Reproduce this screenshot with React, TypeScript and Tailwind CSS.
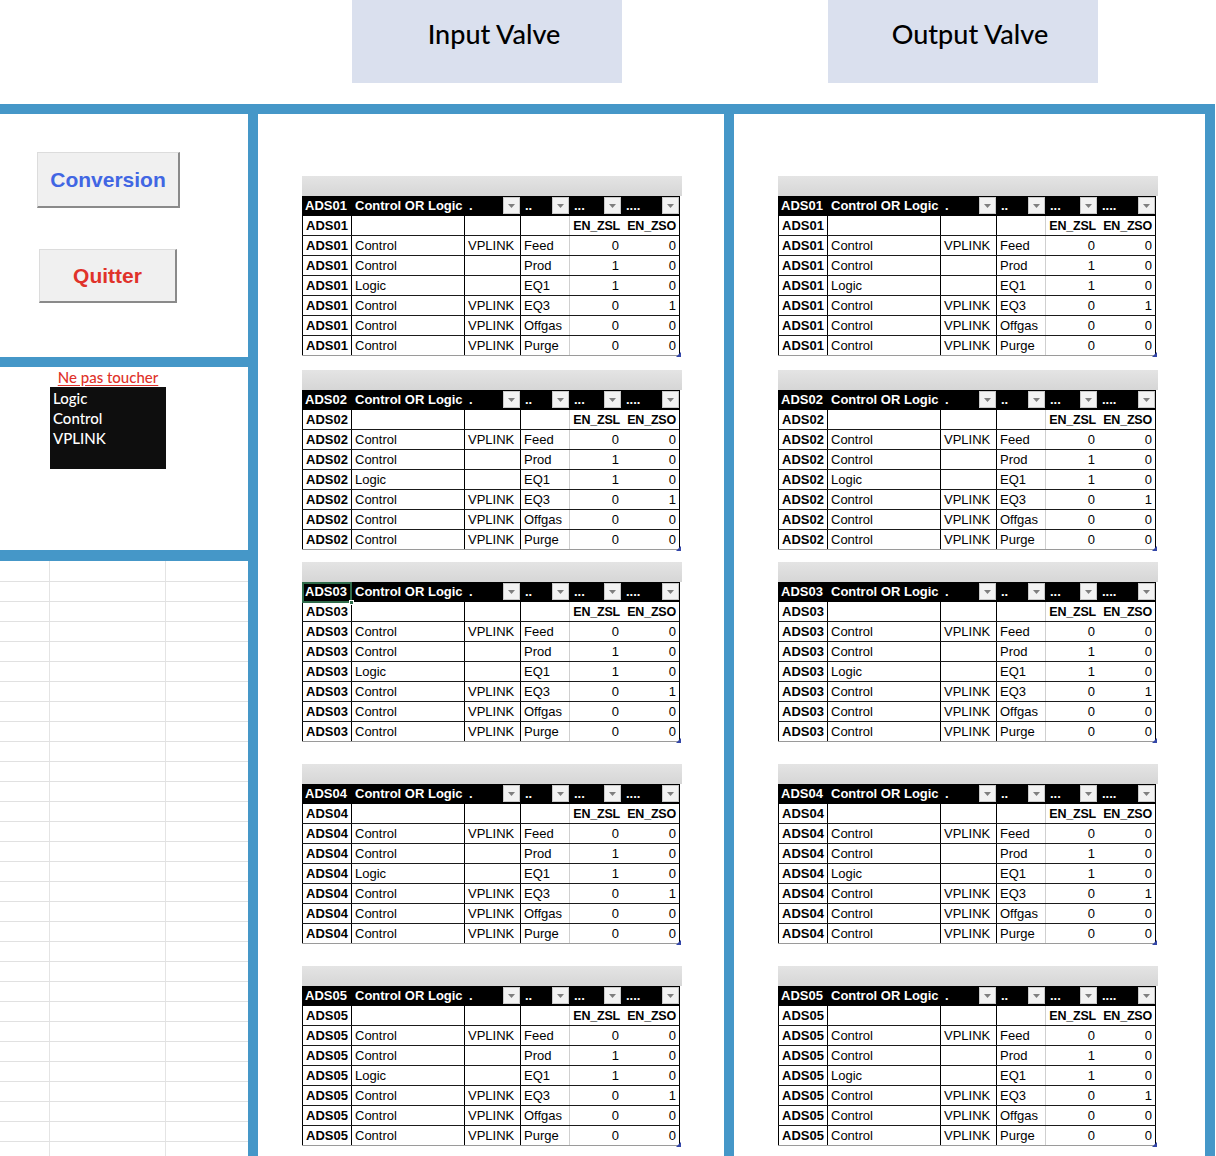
import React from "react";

const CELL_FONT = { fontFamily: '"Liberation Sans", Arial, sans-serif' };
const TITLE_FONT = { fontFamily: 'Lato, "Noto Sans", sans-serif' };

const rowsData: string[][] = [
  ["Control", "VPLINK", "Feed", "0", "0"],
  ["Control", "", "Prod", "1", "0"],
  ["Logic", "", "EQ1", "1", "0"],
  ["Control", "VPLINK", "EQ3", "0", "1"],
  ["Control", "VPLINK", "Offgas", "0", "0"],
  ["Control", "VPLINK", "Purge", "0", "0"],
];

function Dropdown() {
  return (
    <span className="absolute right-[1px] top-[1px] w-[17px] h-[17px] bg-[#f2f2f2] border border-[#c9c9c9] flex items-center justify-center">
      <svg width="7" height="4" viewBox="0 0 7 4">
        <polygon points="0,0 7,0 3.5,4" fill="#7f7f7f" />
      </svg>
    </span>
  );
}

function Block({ n, mt, selected }: { n: number; mt: string; selected?: boolean }) {
  const id = `ADS0${n}`;
  return (
    <div className={`${mt} w-[380px] text-[13px] leading-[20px] text-black`} style={CELL_FONT}>
      <div className="h-[20px] w-[380px] bg-gradient-to-b from-[#e4e4e4] to-[#d6d6d6]" />
      <div className="flex h-[20px] w-[378px] bg-black text-white font-bold">
        <div className="w-[50px] pl-[3px] relative">
          {id}
          {selected && (
            <span className="absolute left-0 top-0 w-[50px] h-[21px] border-2 border-[#2f6b4a]">
              <span className="absolute right-[-4px] bottom-[-4px] w-[5px] h-[5px] bg-[#2f6b4a] border border-white" />
            </span>
          )}
        </div>
        <div className="w-[113px] pl-[3px]">Control OR Logic</div>
        <div className="w-[56px] pl-[4px] relative">
          .
          <Dropdown />
        </div>
        <div className="w-[49px] pl-[4px] relative">
          ..
          <Dropdown />
        </div>
        <div className="w-[52px] pl-[4px] relative">
          ...
          <Dropdown />
        </div>
        <div className="w-[58px] pl-[4px] relative">
          ....
          <Dropdown />
        </div>
      </div>
      <div className="flex h-[20px] w-[378px] border-b border-[#1a1a1a]">
        <div className="w-[50px] pl-[3px] font-bold border-l border-r border-black">{id}</div>
        <div className="w-[113px] border-r border-black" />
        <div className="w-[56px] border-r border-black" />
        <div className="w-[49px] border-r border-[#cfcfcf]" />
        <div className="w-[52px] pr-[2px] text-right font-bold text-[12.5px] tracking-[-0.2px]">EN_ZSL</div>
        <div className="w-[58px] pr-[3px] text-right font-bold text-[12.5px] tracking-[-0.2px] border-r border-black">EN_ZSO</div>
      </div>
      {rowsData.map((r, i) => {
        const last = i === rowsData.length - 1;
        return (
          <div
            key={i}
            className={`flex h-[20px] w-[378px] border-b ${last ? "border-[#9a9a9a]" : "border-[#1a1a1a]"}`}
          >
            <div className="w-[50px] pl-[3px] font-bold border-l border-r border-black">{id}</div>
            <div className="w-[113px] pl-[3px] border-r border-black">{r[0]}</div>
            <div className="w-[56px] pl-[3px] border-r border-black">{r[1]}</div>
            <div className="w-[49px] pl-[3px] border-r border-[#cfcfcf]">{r[2]}</div>
            <div className="w-[52px] pr-[3px] text-right">{r[3]}</div>
            <div className="w-[58px] pr-[3px] text-right border-r border-black relative">
              {r[4]}
              {last && (
                <svg className="absolute right-[-2px] bottom-[-2px]" width="5" height="5" viewBox="0 0 5 5">
                  <polygon points="5,0 5,5 0,5" fill="#3346a8" />
                </svg>
              )}
            </div>
          </div>
        );
      })}
    </div>
  );
}

function Tables({ selectThird }: { selectThird?: boolean }) {
  return (
    <div className="flex flex-col">
      <Block n={1} mt="mt-[62px]" />
      <Block n={2} mt="mt-[14px]" />
      <Block n={3} mt="mt-[12px]" selected={selectThird} />
      <Block n={4} mt="mt-[22px]" />
      <Block n={5} mt="mt-[22px]" />
    </div>
  );
}

function LeftGrid() {
  const rows = Array.from({ length: 30 });
  return (
    <div className="flex-1 overflow-hidden">
      {rows.map((_, i) => (
        <div
          key={i}
          className={`flex border-b border-[#e1e1e1] ${i === 0 ? "h-[21px]" : "h-[20px]"}`}
        >
          <div className="w-[50px] border-r border-[#e4e4e4]" />
          <div className="w-[116px] border-r border-[#e4e4e4]" />
          <div className="flex-1" />
        </div>
      ))}
    </div>
  );
}

export default function App() {
  return (
    <div className="w-[1216px] h-[1156px] overflow-hidden bg-white">
      {/* top header */}
      <div className="h-[104px] flex pl-[352px] gap-[206px]">
        <div
          className="w-[270px] h-[83px] bg-[#dae0ee] flex justify-center pl-[14px] pt-[17px] text-[27px] leading-[34px] font-medium text-black"
          style={TITLE_FONT}
        >
          Input Valve
        </div>
        <div
          className="w-[270px] h-[83px] bg-[#dae0ee] flex justify-center pl-[14px] pt-[17px] text-[27px] leading-[34px] font-medium text-black"
          style={TITLE_FONT}
        >
          Output Valve
        </div>
      </div>
      <div className="h-[10px] w-[1215px] bg-[#4597c8]" />
      {/* main area */}
      <div className="flex h-[1042px]">
        <div className="w-[248px] flex flex-col">
          <div className="h-[243px] flex flex-col" style={CELL_FONT}>
            <div className="ml-[37px] mt-[38px] w-[143px] h-[56px] bg-[#f0f0f0] border-t border-l border-[#dcdcdc] border-r-2 border-b-2 border-r-[#8a8a8a] border-b-[#8a8a8a] flex items-center justify-center text-[21px] font-bold text-[#4166e3]">
              Conversion
            </div>
            <div className="ml-[39px] mt-[41px] w-[138px] h-[54px] bg-[#f0f0f0] border-t border-l border-[#dcdcdc] border-r-2 border-b-2 border-r-[#8a8a8a] border-b-[#8a8a8a] flex items-center justify-center text-[21px] font-bold text-[#e0322a]">
              Quitter
            </div>
          </div>
          <div className="h-[10px] bg-[#4597c8]" />
          <div className="h-[183px] flex flex-col" style={TITLE_FONT}>
            <div className="ml-[50px] w-[116px] pt-[2px] h-[20px] flex justify-center">
              <span className="text-[15px] leading-[17px] text-[#e0322a] underline underline-offset-2 font-medium">
                Ne pas toucher
              </span>
            </div>
            <div className="ml-[50px] w-[116px] h-[82px] bg-[#0e0e0e] pl-[3px] pt-[1px] text-white text-[15px] leading-[20px] font-medium">
              <div>Logic</div>
              <div>Control</div>
              <div>VPLINK</div>
            </div>
          </div>
          <div className="h-[11px] bg-[#4597c8]" />
          <LeftGrid />
        </div>
        <div className="w-[10px] bg-[#4597c8]" />
        <div className="w-[466px] pl-[44px]">
          <Tables selectThird />
        </div>
        <div className="w-[10px] bg-[#4597c8]" />
        <div className="w-[471px] pl-[44px]">
          <Tables />
        </div>
        <div className="w-[10px] bg-[#4597c8]" />
        <div className="w-[1px]" />
      </div>
    </div>
  );
}
